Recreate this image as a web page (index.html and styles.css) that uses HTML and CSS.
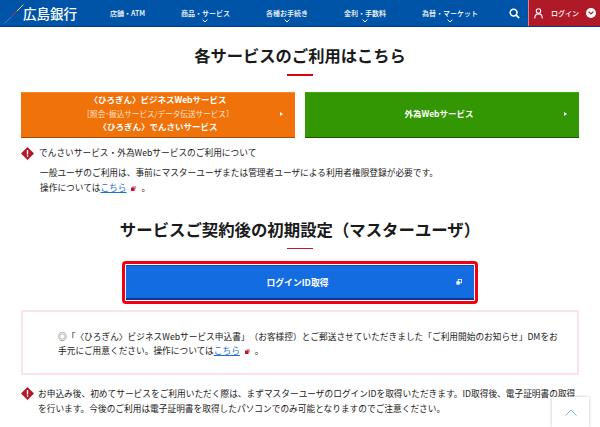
FILE: index.html
```html
<!DOCTYPE html>
<html lang="ja">
<head>
<meta charset="utf-8">
<title>広島銀行</title>
<link rel="stylesheet" href="styles.css">
</head>
<body>
<header class="header">
  <a class="logo">
    <svg class="logo-mark" width="20" height="20" viewBox="0 0 20 20"><path d="M0.5 19.5L7 13" stroke="#3a7fd5" stroke-width="1"/><path d="M7 13L13 7" stroke="#d9283a" stroke-width="1"/><path d="M13 7L19.5 0.5" stroke="#f2d43a" stroke-width="1"/></svg>
    <span class="logo-text">広島銀行</span>
  </a>
  <nav class="nav">
    <a class="nav-item">店舗・ATM</a>
    <a class="nav-item">商品・サービス<svg class="chev" width="6" height="4" viewBox="0 0 6 4"><path d="M.6.6L3 3l2.4-2.4" fill="none" stroke="#fff" stroke-width="1"/></svg></a>
    <a class="nav-item">各種お手続き<svg class="chev" width="6" height="4" viewBox="0 0 6 4"><path d="M.6.6L3 3l2.4-2.4" fill="none" stroke="#fff" stroke-width="1"/></svg></a>
    <a class="nav-item">金利・手数料<svg class="chev" width="6" height="4" viewBox="0 0 6 4"><path d="M.6.6L3 3l2.4-2.4" fill="none" stroke="#fff" stroke-width="1"/></svg></a>
    <a class="nav-item">為替・マーケット<svg class="chev" width="6" height="4" viewBox="0 0 6 4"><path d="M.6.6L3 3l2.4-2.4" fill="none" stroke="#fff" stroke-width="1"/></svg></a>
  </nav>
  <svg class="search" width="11" height="11" viewBox="0 0 11 11"><circle cx="4.6" cy="4.6" r="3.4" fill="none" stroke="#fff" stroke-width="1.6"/><path d="M7.2 7.2L10.2 10.2" stroke="#fff" stroke-width="1.8"/></svg>
  <a class="login">
    <svg width="9" height="11" viewBox="0 0 9 11"><circle cx="4.5" cy="3" r="2.2" fill="none" stroke="#fff" stroke-width="1.1"/><path d="M.7 10.5c0-3 1.5-4.6 3.8-4.6s3.8 1.6 3.8 4.6" fill="none" stroke="#fff" stroke-width="1.1"/></svg>
    <span class="login-text">ログイン</span>
    <span class="login-chev"><svg width="6" height="4" viewBox="0 0 6 4"><path d="M.6.6L3 3l2.4-2.4" fill="none" stroke="#b01a28" stroke-width="1.2"/></svg></span>
  </a>
</header>
<main class="main">
  <h2 class="title title-first">各サービスのご利用はこちら</h2>
  <div class="bar"></div>
  <div class="services">
    <a class="service orange">
      <span class="service-text"><b>〈ひろぎん〉ビジネスWebサービス</b><span class="sub">［照会･振込サービス/データ伝送サービス］</span><b>〈ひろぎん〉でんさいサービス</b></span>
      <i class="arrow"></i>
    </a>
    <a class="service green">
      <span class="service-text"><b>外為Webサービス</b></span>
      <i class="arrow"></i>
    </a>
  </div>
  <div class="notice notice-first">
    <svg class="warn" width="13" height="13" viewBox="0 0 13 13"><path d="M6.5 0L13 6.5 6.5 13 0 6.5z" fill="#b01a28"/><rect x="5.8" y="3" width="1.4" height="4.6" fill="#fff"/><rect x="5.8" y="8.4" width="1.4" height="1.4" fill="#fff"/></svg>
    <p class="notice-head">でんさいサービス・外為Webサービスのご利用について</p>
  </div>
  <p class="detail">一般ユーザのご利用は、事前にマスターユーザまたは管理者ユーザによる利用者権限登録が必要です。<br>操作については<a class="link">こちら</a><svg class="ext" width="5" height="5" viewBox="0 0 5 5"><rect x="1.5" y="0" width="3.5" height="3.5" fill="#e8a0a8"/><rect x="0" y="1.5" width="3.5" height="3.5" fill="#c8102e"/></svg> 。</p>
  <h2 class="title title-second">サービスご契約後の初期設定（マスターユーザ）</h2>
  <div class="bar bar-thin"></div>
  <div class="login-frame">
    <a class="login-id">
      <span>ログインID取得</span>
      <svg class="login-ext" width="6" height="6" viewBox="0 0 6 6"><rect x="2.2" y=".4" width="3.4" height="3.4" fill="none" stroke="#fff" stroke-width=".8"/><rect x=".4" y="2.2" width="3.4" height="3.4" fill="#fff"/></svg>
    </a>
  </div>
  <div class="pinkbox">
    <p>◎「〈ひろぎん〉ビジネスWebサービス申込書」（お客様控）とご郵送させていただきました「ご利用開始のお知らせ」DMをお手元にご用意ください。操作については<a class="link">こちら</a><svg class="ext" width="5" height="5" viewBox="0 0 5 5"><rect x="1.5" y="0" width="3.5" height="3.5" fill="#e8a0a8"/><rect x="0" y="1.5" width="3.5" height="3.5" fill="#c8102e"/></svg> 。</p>
  </div>
  <div class="notice notice-second">
    <svg class="warn" width="13" height="13" viewBox="0 0 13 13"><path d="M6.5 0L13 6.5 6.5 13 0 6.5z" fill="#b01a28"/><rect x="5.8" y="3" width="1.4" height="4.6" fill="#fff"/><rect x="5.8" y="8.4" width="1.4" height="1.4" fill="#fff"/></svg>
    <p class="notice-body">お申込み後、初めてサービスをご利用いただく際は、まずマスターユーザのログインIDを取得いただきます。ID取得後、電子証明書の取得を行います。今後のご利用は電子証明書を取得したパソコンでのみ可能となりますのでご注意ください。</p>
  </div>
</main>
<a class="totop"><svg width="12" height="7" viewBox="0 0 12 7"><path d="M.5 6.5L6 1l5.500 5.500" fill="none" stroke="#7fb2e8" stroke-width="1"/></svg></a>
</body>
</html>
```
FILE: styles.css
```css
html, body { margin: 0; padding: 0; height: 427px; overflow: hidden; background: #fff; }
body { font-family: "Noto Sans CJK JP", "Liberation Sans", sans-serif; font-size: 8.700px; color: #1a1a1a; position: relative; text-spacing-trim: space-all; }
p, h2 { margin: 0; }
.header { height: 26px; background: #0054a7; border-bottom: 1px solid #003b8c; display: flex; align-items: center; color: #fff; }
.logo { display: flex; align-items: center; width: 100px; padding-left: 4px; box-sizing: border-box; flex: none; }
.logo-mark { flex: none; margin-top: 1px; }
.logo-text { font-size: 13.500px; font-weight: 500; margin-left: -1px; white-space: nowrap; }
.nav { display: flex; flex: none; width: 404px; height: 26px; box-sizing: border-box; padding-left: 10px; gap: 36px; }
.nav-item { position: relative; font-size: 7px; line-height: 26px; font-weight: 500; white-space: nowrap; }
.chev { position: absolute; left: 50%; margin-left: -3px; top: 19px; }
.search { flex: none; margin-left: 5px; }
.login { flex: none; margin-left: 8px; width: 72px; height: 26px; background: #b01a28; border-left: 1px solid #e9808a; box-sizing: border-box; display: flex; align-items: center; padding-left: 5px; }
.login-text { font-size: 7px; font-weight: 500; margin-left: 8px; }
.login-chev { width: 10px; height: 10px; margin-left: 7px; border-radius: 50%; background: #fff; display: flex; align-items: center; justify-content: center; }
.main { display: flex; flex-direction: column; padding: 0 21px; }
.title { font-size: 16.300px; line-height: 24px; font-weight: 700; color: #1a1a1a; text-align: center; white-space: nowrap; }
.title-first { margin-top: 16px; }
.title-second { margin-top: 22px; font-size: 16.400px; }
.bar { width: 26px; height: 2px; background: #e00012; margin: 7px auto 0; }
.bar-thin { height: 1px; background: #c0182a; margin-top: 7px; }
.services { display: grid; grid-template-columns: 274px 274px; gap: 10px; margin-top: 16px; }
.service { position: relative; height: 46px; box-sizing: border-box; display: flex; align-items: center; justify-content: center; color: #fff; text-align: center; font-size: 8.500px; line-height: 13.500px; padding-bottom: 3px; }
.orange { background: #f0720a; border-top: 1px solid #f58a2e; border-bottom: 1px solid #a84d05; }
.green { background: #339703; border-top: 1px solid #3cab06; border-bottom: 1px solid #1c5a00; padding-right: 6px; }
.service-text { display: flex; flex-direction: column; }
.service-text b { font-weight: 700; }
.sub { font-weight: 400; color: #ffe6cf; font-size: 7.600px; }
.arrow { position: absolute; right: 12px; top: 19px; width: 0; height: 0; border-left: 3px solid #fff; border-top: 2.500px solid transparent; border-bottom: 2.500px solid transparent; }
.notice { display: flex; align-items: flex-start; }
.notice-first { margin-top: 8px; align-items: center; }
.warn { flex: none; }
.notice-head { margin-left: 5px; line-height: 14px; white-space: nowrap; }
.detail { margin: 5px 0 0 19px; line-height: 15px; white-space: nowrap; }
.link { color: #1a6fd8; text-decoration: underline; }
.ext { margin: 0 3px 0 5px; }
.login-frame { margin: 12px auto 0; width: 356px; height: 43px; box-sizing: border-box; border: 3px solid #f00010; border-radius: 4px; background: #fff; padding: 1px; }
.login-id { position: relative; height: 100%; display: flex; align-items: center; justify-content: center; box-sizing: border-box; background: #136ce0; border-top: 1px solid #0e4fb0; border-bottom: 2px solid #0a3a8c; color: #fff; font-size: 8.800px; font-weight: 700; padding-right: 5px; }
.login-ext { position: absolute; right: 12px; top: 13px; }
.pinkbox { margin-top: 6px; height: 65px; box-sizing: border-box; border: 2px solid #fbe3ee; padding: 18px 12px 0 35px; line-height: 14px; }
.notice-second { margin-top: 12px; }
.notice-body { margin-left: 4px; line-height: 14.500px; flex: 1; }
.totop { position: absolute; left: 552px; top: 397px; width: 37px; height: 30px; background: #fff; box-shadow: 0 0 3px rgba(0,0,0,.25); display: flex; align-items: center; justify-content: center; }
```
